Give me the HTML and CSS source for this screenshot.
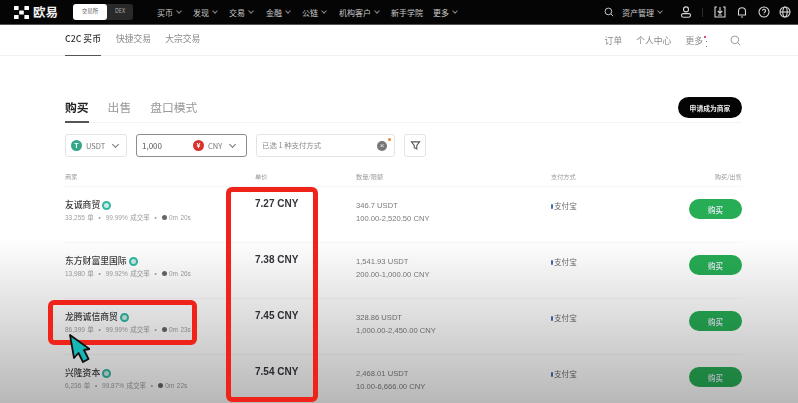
FILE: index.html
```html
<!DOCTYPE html>
<html lang="zh-CN">
<head>
<meta charset="utf-8">
<title>欧易 C2C</title>
<link rel="stylesheet" href="styles.css">
</head>
<body>
<div class="page">
  <header class="topbar">
    <div class="brand">
      <svg class="logo" viewBox="0 0 15 13"><rect x="0" y="0" width="4.6" height="4" rx=".5"/><rect x="10.4" y="0" width="4.6" height="4" rx=".5"/><rect x="5.2" y="4.5" width="4.6" height="4" rx=".5"/><rect x="0" y="9" width="4.6" height="4" rx=".5"/><rect x="10.4" y="9" width="4.6" height="4" rx=".5"/></svg>
      <span class="brand-name">欧易</span>
    </div>
    <div class="switch"><span class="switch-on">交易所</span><span class="switch-off">DEX</span></div>
    <nav class="mainnav">
      <span class="navitem w36">买币<i class="chev"></i></span>
      <span class="navitem w36">发现<i class="chev"></i></span>
      <span class="navitem w37">交易<i class="chev"></i></span>
      <span class="navitem w36">金融<i class="chev"></i></span>
      <span class="navitem w37">公链<i class="chev"></i></span>
      <span class="navitem w52">机构客户<i class="chev"></i></span>
      <span class="navitem w42">新手学院</span>
      <span class="navitem">更多<i class="chev"></i></span>
    </nav>
    <div class="topright">
      <svg class="ico search-top" viewBox="0 0 12 12"><circle cx="5.3" cy="5.3" r="4"/><path d="M8.3 8.3 11 11"/></svg>
      <span class="navitem assets">资产管理<i class="chev"></i></span>
      <svg class="ico user" viewBox="0 0 12 12"><circle cx="6" cy="3.4" r="2.5"/><rect x="1.5" y="7.6" width="9" height="3.6" rx="1.6"/></svg>
      <i class="divider"></i>
      <svg class="ico dl" viewBox="0 0 12 12"><path d="M3 1H1v10h10V1H9"/><path d="M6 1v6M3.8 5 6 7.2 8.2 5M4 9h4"/></svg>
      <svg class="ico bell" viewBox="0 0 12 12"><path d="M2.5 9V5.2a3.500 3.500 0 0 1 7 0V9z"/><path d="M5 11h2"/></svg>
      <svg class="ico help" viewBox="0 0 12 12"><circle cx="6" cy="6" r="5"/><path d="M4.5 4.8a1.500 1.500 0 1 1 2.200 1.300c-.5.3-.7.6-.7 1.100M6 8.400v.7"/></svg>
      <svg class="ico globe" viewBox="0 0 12 12"><circle cx="6" cy="6" r="5"/><ellipse cx="6" cy="6" rx="2.2" ry="5"/><path d="M1 6h10"/></svg>
    </div>
  </header>

  <div class="subnav">
    <span class="sub active">C2C 买币</span>
    <span class="sub">快捷交易</span>
    <span class="sub">大宗交易</span>
    <div class="subright">
      <span>订单</span>
      <span>个人中心</span>
      <span class="more">更多<b class="reddot"></b><i class="dots"></i></span>
      <svg class="ico sub-search" viewBox="0 0 12 12"><circle cx="5.3" cy="5.3" r="4.2"/><path d="M8.4 8.4 11 11"/></svg>
    </div>
  </div>

  <main class="content">
    <div class="tabs">
      <span class="tab active">购买</span>
      <span class="tab">出售</span>
      <span class="tab">盘口模式</span>
      <button class="apply">申请成为商家</button>
    </div>

    <div class="filters">
      <div class="field f-coin"><span class="coin usdt">T</span><span>USDT</span><i class="chev dark"></i></div>
      <div class="field f-amount"><span class="amount">1,000</span><span class="coin cny">¥</span><span>CNY</span><i class="chev dark"></i></div>
      <div class="field f-pay"><span class="pay-label">已选 1 种支付方式</span><span class="clear">×</span><b class="orangedot"></b></div>
      <div class="field f-filter"><svg class="funnel" viewBox="0 0 12 12"><path d="M1.5 2h9L7.4 6v3.6L4.6 8.4V6z"/></svg></div>
    </div>

    <div class="grid-row head">
      <span>商家</span><span>单价</span><span>数量/限额</span><span>支付方式</span><span class="end">购买/出售</span>
    </div>

    <div class="grid-row item">
      <div><div class="name">友诚商贸<i class="badge"></i></div><div class="meta">33,255 单 &nbsp;•&nbsp; 99.99% 成交率 &nbsp;•&nbsp; <i class="clock"></i> 0m 20s</div></div>
      <div class="price">7.27 CNY</div>
      <div class="qty"><div>346.7 USDT</div><div>100.00-2,520.50 CNY</div></div>
      <div class="pay"><i class="paymark"></i>支付宝</div>
      <div class="end"><button class="buy">购买</button></div>
    </div>
    <div class="grid-row item">
      <div><div class="name">东方财富里国际<i class="badge"></i></div><div class="meta">13,980 单 &nbsp;•&nbsp; 99.92% 成交率 &nbsp;•&nbsp; <i class="clock"></i> 0m 26s</div></div>
      <div class="price">7.38 CNY</div>
      <div class="qty"><div>1,541.93 USDT</div><div>200.00-1,000.00 CNY</div></div>
      <div class="pay"><i class="paymark"></i>支付宝</div>
      <div class="end"><button class="buy">购买</button></div>
    </div>
    <div class="grid-row item">
      <div><div class="name">龙腾诚信商贸<i class="badge"></i></div><div class="meta">86,399 单 &nbsp;•&nbsp; 99.99% 成交率 &nbsp;•&nbsp; <i class="clock"></i> 0m 23s</div></div>
      <div class="price">7.45 CNY</div>
      <div class="qty"><div>328.86 USDT</div><div>1,000.00-2,450.00 CNY</div></div>
      <div class="pay"><i class="paymark"></i>支付宝</div>
      <div class="end"><button class="buy">购买</button></div>
    </div>
    <div class="grid-row item">
      <div><div class="name">兴隆资本<i class="badge"></i></div><div class="meta">6,236 单 &nbsp;•&nbsp; 99.87% 成交率 &nbsp;•&nbsp; <i class="clock"></i> 0m 22s</div></div>
      <div class="price">7.54 CNY</div>
      <div class="qty"><div>2,468.01 USDT</div><div>10.00-6,666.00 CNY</div></div>
      <div class="pay"><i class="paymark"></i>支付宝</div>
      <div class="end"><button class="buy">购买</button></div>
    </div>
  </main>
  <div class="shade"></div>
</div>
<div class="mark mark-price"></div>
<div class="mark mark-name"></div>
<svg class="cursor" viewBox="0 0 22 30"><path d="M2 1 6 24l4.500-5L15 28l5.500-3-4.500-9 5.500-1z" fill="#17b7b5" stroke="#111" stroke-width="1.800" stroke-linejoin="round"/></svg>
</body>
</html>
```
FILE: styles.css
```css
* { box-sizing: border-box; }
html, body { margin: 0; padding: 0; }
body {
  width: 798px;
  height: 403px;
  overflow: hidden;
  background: #fff;
  position: relative;
  font-family: "Noto Sans CJK SC", "Liberation Sans", sans-serif;
}
.page {
  width: 798px;
  height: 403px;
  position: relative;
  overflow: hidden;
  filter: blur(.55px);
}
i { font-style: normal; }

.topbar {
  height: 25px;
  background: #050505;
  border-bottom: 1px solid #555;
  display: flex;
  align-items: center;
  padding-left: 14px;
  color: #c9c9c9;
  font-size: 8px;
}
.brand { display: flex; align-items: center; width: 59px; }
.logo { width: 15px; height: 13px; fill: #fff; margin-right: 4px; }
.brand-name { font-size: 12.5px; line-height: 14px; color: #f0f0f0; font-weight: 700; }
.switch {
  display: flex;
  width: 60px;
  height: 16px;
  background: #2a2a2a;
  border-radius: 3px;
  font-size: 5.5px;
  line-height: 15px;
  text-align: center;
}
.switch-on { width: 34px; background: #fff; color: #666; border-radius: 3px; }
.switch-off { flex: 1; color: #aaa; }
.mainnav { display: flex; margin-left: 24px; }
.navitem { display: inline-flex; align-items: center; white-space: nowrap; }
.w36 { width: 36px; }
.w37 { width: 37px; }
.w52 { width: 52px; }
.w42 { width: 42px; }
.chev {
  width: 4px;
  height: 4px;
  border-right: .8px solid #888;
  border-bottom: .8px solid #888;
  transform: rotate(45deg);
  margin: -2px 0 0 4px;
  display: inline-block;
}
.chev.dark { width: 5px; height: 5px; border-color: #777; margin-left: 8px; }
.topright { margin-left: auto; display: flex; align-items: center; padding-right: 7px; }
.ico { fill: none; stroke: #d6d6d6; stroke-width: 1.1; width: 12px; height: 12px; flex: none; }
.search-top { width: 10px; height: 10px; margin-right: 8px; }
.assets { width: 46px; }
.user { margin-left: 12px; }
.divider { width: 1px; height: 9px; background: #2c2c2c; margin-left: 10px; }
.dl { margin-left: 11px; }
.bell { margin-left: 10px; }
.help { margin-left: 10px; }
.globe { margin-left: 9px; }

.subnav {
  height: 31px;
  display: flex;
  align-items: stretch;
  padding: 0 56px 0 65px;
  font-size: 8.8px;
  color: #8a8a8a;
  border-bottom: 1px solid #f1f1f1;
}
.sub { margin-right: 14px; line-height: 28px; height: 31px; }
.sub.active { color: #333; font-weight: 500; border-bottom: 1px solid #555; margin-right: 15px; }
.subright { margin-left: auto; display: flex; align-items: center; }
.subright span { margin-right: 14px; }
.subright .more { position: relative; margin-right: 27px; }
.reddot { position: absolute; top: 2px; right: -3px; width: 2.5px; height: 2.5px; border-radius: 50%; background: #d3123a; }
.dots { position: absolute; top: 7px; right: -4px; width: 1px; height: 6px; border-top: 1px solid #777; border-bottom: 1px solid #777; }
.sub-search { width: 11px; height: 11px; stroke: #888; stroke-width: .9; margin-right: 1px; }

.content { padding: 40px 56px 0 65px; }
.tabs {
  height: 27px;
  display: flex;
  align-items: flex-start;
  position: relative;
  border-bottom: 1px solid #f3f3f3;
  font-size: 11.8px;
  color: #999;
}
.tab { margin-right: 19px; line-height: 22px; height: 27px; }
.tab.active { color: #222; font-weight: 600; border-bottom: 2px solid #555; }
.apply {
  margin-left: auto;
  margin-top: 1px;
  width: 64px;
  height: 21px;
  border: 0;
  border-radius: 11px;
  background: #050505;
  color: #eee;
  font: 600 6.8px "Noto Sans CJK SC", sans-serif;
  padding: 0;
}

.filters { display: flex; gap: 9px; margin-top: 11px; height: 23px; font-size: 7.5px; color: #777; }
.field {
  display: flex;
  align-items: center;
  border: 1px solid #e3e3e3;
  border-radius: 3px;
  padding: 0 6px 0 5px;
  position: relative;
}
.f-coin { width: 62px; }
.f-amount { width: 111px; border: 1px solid #8c8c8c; }
.f-pay { width: 139px; }
.f-filter { width: 22px; justify-content: center; padding: 0; }
.coin {
  width: 11px;
  height: 11px;
  border-radius: 50%;
  color: #fff;
  font: 700 7px/11px "Liberation Sans", sans-serif;
  text-align: center;
  margin-right: 4px;
  flex: none;
}
.usdt { background: #36a58a; }
.cny { background: #d8322c; margin-left: 25px; }
.amount { color: #555; font-size: 8px; width: 26px; }
.pay-label { color: #8a8a8a; font-size: 7.4px; line-height: 9px; margin-top: -2px; }
.clear {
  margin-left: auto;
  margin-right: 1px;
  width: 10px;
  height: 10px;
  border-radius: 50%;
  background: #777;
  color: #eee;
  font: 8px/10px "Liberation Sans", sans-serif;
  text-align: center;
}
.orangedot { position: absolute; top: 3px; right: 3px; width: 3px; height: 3px; border-radius: 50%; background: #e8852b; }
.funnel { width: 11px; height: 11px; fill: none; stroke: #555; stroke-width: 1.2; }

.grid-row { display: grid; grid-template-columns: 190px 101px 195px 1fr 60px; border-bottom: 1px solid #f6f6f6; }
.head { height: 30px; padding-top: 15px; font-size: 6.2px; line-height: 9px; color: #9a9a9a; }
.end { text-align: right; }
.item { height: 56px; padding-top: 10px; }
.name { font-size: 8.8px; line-height: 16px; color: #3c3c3c; font-weight: 500; display: flex; align-items: center; }
.badge { width: 9px; height: 9px; border-radius: 50%; border: 2px solid #2fb8a3; background: #cdebe6; margin-left: 2px; }
.meta { font-size: 6.5px; line-height: 9px; color: #a0a0a0; margin-top: 0; white-space: nowrap; word-spacing: .6px; font-family: "Liberation Sans", "Noto Sans CJK SC", sans-serif; }
.clock { display: inline-block; width: 5px; height: 5px; border-radius: 50%; background: #666; }
.price { font: 700 10px/14px "Liberation Sans", sans-serif; color: #34343c; }
.qty { font: 7.6px/13px "Liberation Sans", "Noto Sans CJK SC", sans-serif; color: #7a7a7a; padding-top: 2px; }
.pay { font-size: 7.6px; line-height: 14px; color: #666; padding-top: 2px; display: flex; align-items: center; align-self: start; }
.paymark { width: 2px; height: 5px; background: #3f6fb5; border-radius: 1px; margin-right: 1px; }
.buy {
  display: block;
  margin: 2px 0 0 auto;
  width: 53px;
  height: 20px;
  border: 0;
  border-radius: 10px;
  background: #27ad55;
  color: #eef;
  font: 500 7.5px "Noto Sans CJK SC", sans-serif;
  padding: 0;
}

.shade {
  position: absolute;
  inset: 0;
  pointer-events: none;
  background: linear-gradient(to bottom, rgba(0,0,0,0) 0, rgba(0,0,0,0) 238px, rgba(0,0,0,.28) 403px);
}
.mark { position: absolute; border: 5px solid #f0231a; border-radius: 6px; }
.mark-price { left: 226px; top: 187px; width: 92px; height: 215px; }
.mark-name { left: 48px; top: 300px; width: 149px; height: 45px; }
.cursor { position: absolute; left: 68px; top: 334px; width: 22px; height: 30px; }
```
